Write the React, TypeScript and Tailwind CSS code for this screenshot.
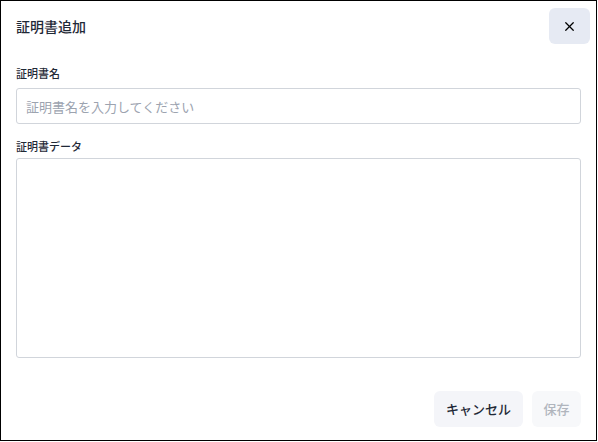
import { X } from 'lucide-react';

export default function App() {
  return (
    <div
      className="w-[597px] h-[441px] border border-black bg-white flex flex-col text-[#1f2937]"
      style={{ fontFamily: '"Noto Sans CJK JP", "Noto Sans", sans-serif' }}
    >
      <div className="flex items-center justify-between pl-[15px] pr-[6px] pt-[7px]">
        <h2 className="text-[14px] font-medium leading-none">証明書追加</h2>
        <button className="w-[41px] h-[36px] rounded-md bg-[#e6eaf3] flex items-center justify-center text-black">
          <X size={15} strokeWidth={2} />
        </button>
      </div>

      <div className="flex flex-col px-[15px] pt-[24px]">
        <label className="text-[11px] font-medium leading-none mb-[9px]">証明書名</label>
        <input
          className="h-[36px] border border-[#d1d5db] rounded-[3px] px-[9px] text-[13px] outline-none placeholder:text-[#9ca3af]"
          placeholder="証明書名を入力してください"
        />
        <label className="text-[11px] font-medium leading-none mt-[17px] mb-[6px]">証明書データ</label>
        <textarea className="h-[200px] border border-[#d1d5db] rounded-[3px] resize-none outline-none" />
      </div>

      <div className="flex justify-end gap-[9px] px-[15px] pt-[33px]">
        <button className="h-[36px] w-[89px] rounded-md bg-[#f4f5f9] text-[13px] font-medium">キャンセル</button>
        <button className="h-[36px] w-[49px] rounded-md bg-[#f7f8fa] text-[13px] font-medium text-[#b0b5bd]">保存</button>
      </div>
    </div>
  );
}
